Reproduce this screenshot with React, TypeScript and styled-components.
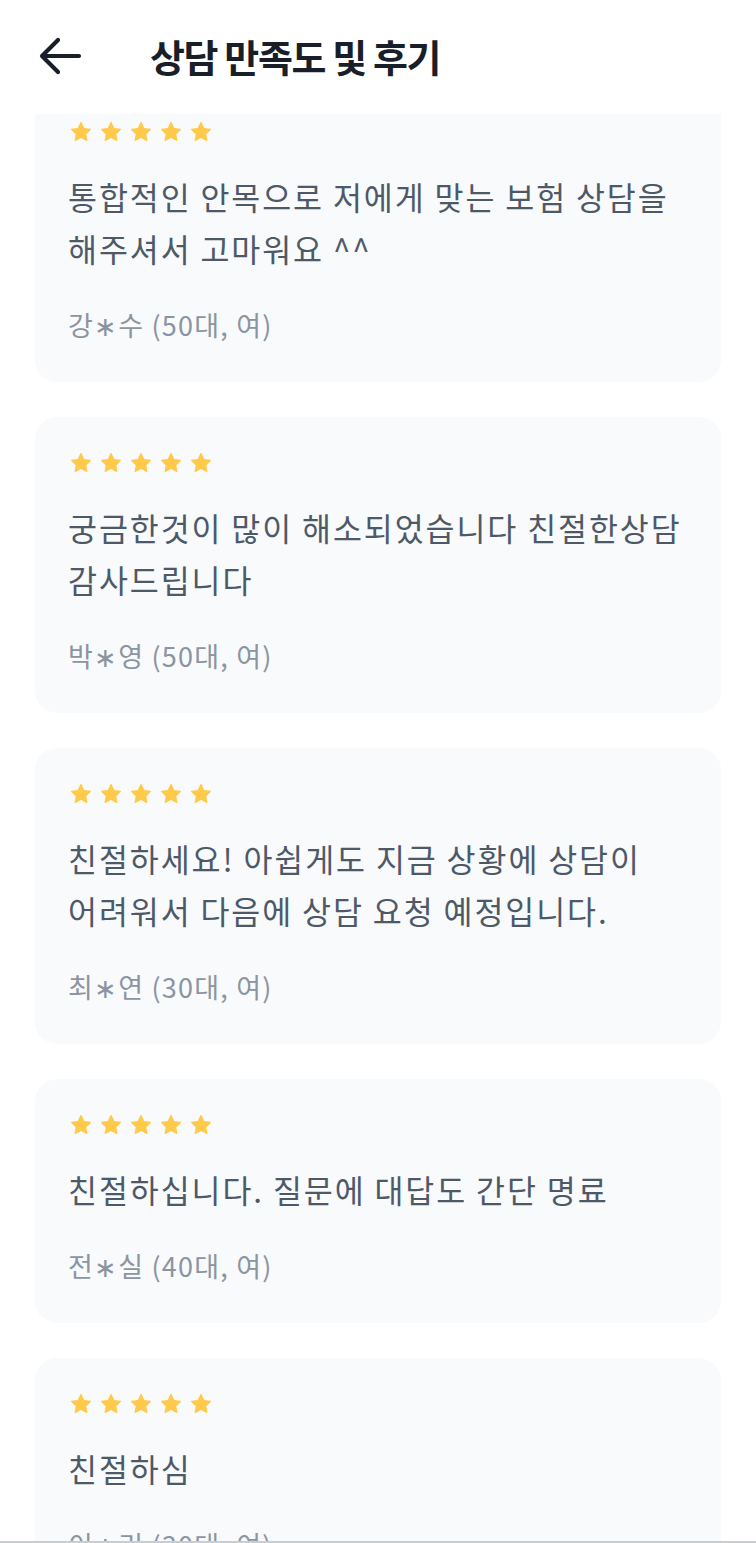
import React from "react";
import styled, { createGlobalStyle } from "styled-components";

const GlobalStyle = createGlobalStyle`
  html, body { margin: 0; padding: 0; background: #ffffff; }
  body {
    font-family: "Noto Sans CJK KR", "Noto Sans", sans-serif;
    overflow: hidden;
  }
  * { box-sizing: border-box; }
`;

const Page = styled.div`
  width: 756px;
  height: 1543px;
  display: flex;
  flex-direction: column;
  overflow: hidden;
  background: #ffffff;
`;

const Header = styled.header`
  position: relative;
  z-index: 2;
  height: 114px;
  flex: 0 0 114px;
  background: #ffffff;
  display: flex;
  align-items: center;
  padding-left: 37px;
`;

const BackButton = styled.button`
  width: 46px;
  height: 46px;
  padding: 0;
  border: none;
  background: transparent;
  display: flex;
  align-items: center;
  justify-content: center;
  margin-right: 67px;
  margin-top: -3px;
`;

const Title = styled.h1`
  margin: 0;
  font-size: 38px;
  font-weight: 700;
  color: #191f28;
  letter-spacing: -1.4px;
  margin-top: -4px;
`;

const Content = styled.main`
  flex: 1;
  overflow: hidden;
  padding: 0 35px;
`;

const List = styled.div`
  display: flex;
  flex-direction: column;
  gap: 35px;
  margin-top: -28px;
`;

const Card = styled.section`
  background: #f8fafc;
  border-radius: 22px;
  padding: 35px 33px 37px;
`;

const Stars = styled.div`
  display: flex;
  gap: 8px;
  height: 22px;
  align-items: center;
  padding-left: 2px;
`;

const Body = styled.p`
  margin: 27px 0 0;
  font-size: 31.5px;
  line-height: 52px;
  letter-spacing: 1.9px;
  color: #4e5968;
  font-weight: 400;
`;

const Meta = styled.div`
  margin-top: 31px;
  font-size: 27px;
  line-height: 40px;
  letter-spacing: 1.2px;
  color: #8b95a1;
`;

const BottomLine = styled.div`
  flex: 0 0 2px;
  background: #c9cdd2;
`;

const Star = () => (
  <svg width="22" height="22" viewBox="0 0 24 24">
    <path
      d="M12 1.8l3.1 6.5 7 .9-5.1 4.9 1.3 7-6.3-3.4-6.3 3.4 1.3-7L1.9 9.2l7-.9z"
      fill="#ffc94a"
      stroke="#ffc94a"
      strokeWidth="1.4"
      strokeLinejoin="round"
    />
  </svg>
);

const reviews = [
  { text: ["통합적인 안목으로 저에게 맞는 보험 상담을", "해주셔서 고마워요 ^^"], meta: "강∗수 (50대, 여)" },
  { text: ["궁금한것이 많이 해소되었습니다 친절한상담", "감사드립니다"], meta: "박∗영 (50대, 여)" },
  { text: ["친절하세요! 아쉽게도 지금 상황에 상담이", "어려워서 다음에 상담 요청 예정입니다."], meta: "최∗연 (30대, 여)" },
  { text: ["친절하십니다. 질문에 대답도 간단 명료"], meta: "전∗실 (40대, 여)" },
  { text: ["친절하심"], meta: "이∗리 (30대, 여)" },
];

export default function App() {
  return (
    <Page>
      <GlobalStyle />
      <Header>
        <BackButton aria-label="뒤로">
          <svg width="44" height="40" viewBox="0 0 44 40" fill="none">
            <path
              d="M41 20H5M20 4L4 20l16 16"
              stroke="#191f28"
              strokeWidth="4.2"
              strokeLinecap="round"
              strokeLinejoin="round"
            />
          </svg>
        </BackButton>
        <Title>상담 만족도 및 후기</Title>
      </Header>
      <Content>
        <List>
          {reviews.map((r, i) => (
            <Card key={i}>
              <Stars>
                {[0, 1, 2, 3, 4].map((s) => (
                  <Star key={s} />
                ))}
              </Stars>
              <Body>
                {r.text.map((t, j) => (
                  <React.Fragment key={j}>
                    {j > 0 && <br />}
                    {t}
                  </React.Fragment>
                ))}
              </Body>
              <Meta>{r.meta}</Meta>
            </Card>
          ))}
        </List>
      </Content>
      <BottomLine />
    </Page>
  );
}
